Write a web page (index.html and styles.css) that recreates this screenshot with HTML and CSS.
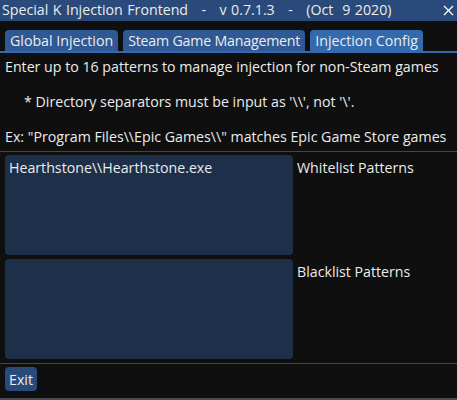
FILE: index.html
```html
<!DOCTYPE html>
<html lang="en">
  <head>
    <meta charset="UTF-8" />
    <title>Special K Injection Frontend</title>
    <link rel="stylesheet" href="styles.css">
  </head>
  <body>
    <div class="window">
      <div class="titlebar">
        <span class="title">Special K Injection Frontend   -   v 0.7.1.3   -   (Oct  9 2020)</span>
        <svg class="close" width="11" height="11" viewBox="0 0 11 11">
          <path d="M1 1 L10 10 M10 1 L1 10" stroke="#ffffff" stroke-width="1.3" />
        </svg>
      </div>

      <div class="tabbar">
        <div class="tab">Global Injection</div>
        <div class="tab tab-wide">Steam Game Management</div>
        <div class="tab active">Injection Config</div>
      </div>

      <div class="content">
        <p class="line">Enter up to 16 patterns to manage injection for non-Steam games</p>
        <p class="line note">* Directory separators must be input as '\\', not '\'.</p>
        <p class="line last">Ex: "Program Files\\Epic Games\\" matches Epic Game Store games</p>

        <hr class="separator" />

        <div class="pattern-row">
          <div class="pattern-box">Hearthstone\\Hearthstone.exe</div>
          <span class="pattern-label">Whitelist Patterns</span>
        </div>
        <div class="pattern-row">
          <div class="pattern-box"></div>
          <span class="pattern-label">Blacklist Patterns</span>
        </div>

        <hr class="separator" />

        <button class="button">Exit</button>
      </div>
    </div>
  </body>
</html>
```

FILE: styles.css
```css
* {
  margin: 0;
  padding: 0;
  box-sizing: border-box;
  font-family: "Open Sans", "Noto Sans", sans-serif;
}

body {
  background-color: #0f0f0f;
  color: #ececec;
  font-size: 14.2px;
  overflow: hidden;
}

.window {
  width: 457px;
  height: 400px;
  display: flex;
  flex-direction: column;
  border-bottom: 2px solid #4a4a52;
}

.titlebar {
  height: 21px;
  flex-shrink: 0;
  background-color: #294a7a;
  display: flex;
  align-items: center;
  justify-content: space-between;
  padding: 0 3px 1px 2px;
}

.title {
  white-space: pre;
  word-spacing: 0.8px;
  line-height: 20px;
}

.tabbar {
  display: flex;
  gap: 5px;
  padding: 9px 5px 0;
  border-bottom: 2px solid #3369ad;
}

.tab {
  height: 21px;
  padding: 0 5px;
  line-height: 21px;
  background-color: #2e5994;
  border-radius: 4px 4px 0 0;
}

.tab.active {
  background-color: #3369ad;
}

.tab-wide {
  letter-spacing: -0.2px;
}

.content {
  flex: 1;
  display: flex;
  flex-direction: column;
  padding: 4px 5px 0;
}

.line {
  line-height: 20px;
  margin-bottom: 15px;
  white-space: nowrap;
}

.line.note {
  padding-left: 19px;
}

.line.last {
  margin-bottom: 4px;
}

.separator {
  border: none;
  border-top: 1px solid #45454f;
  margin: 0 -5px 3px;
}

.pattern-row {
  display: flex;
  gap: 4px;
  margin-bottom: 4px;
}

.pattern-box {
  width: 288px;
  height: 100px;
  background-color: #1d2f49;
  border-radius: 4px;
  padding: 3px 4px;
  line-height: 20px;
}

.pattern-label {
  padding-top: 3px;
  line-height: 20px;
}

.button {
  align-self: flex-start;
  background-color: #294a7a;
  color: #ececec;
  border: none;
  border-radius: 4px;
  height: 24px;
  padding: 0 4px;
  font-size: 14.2px;
}
```
